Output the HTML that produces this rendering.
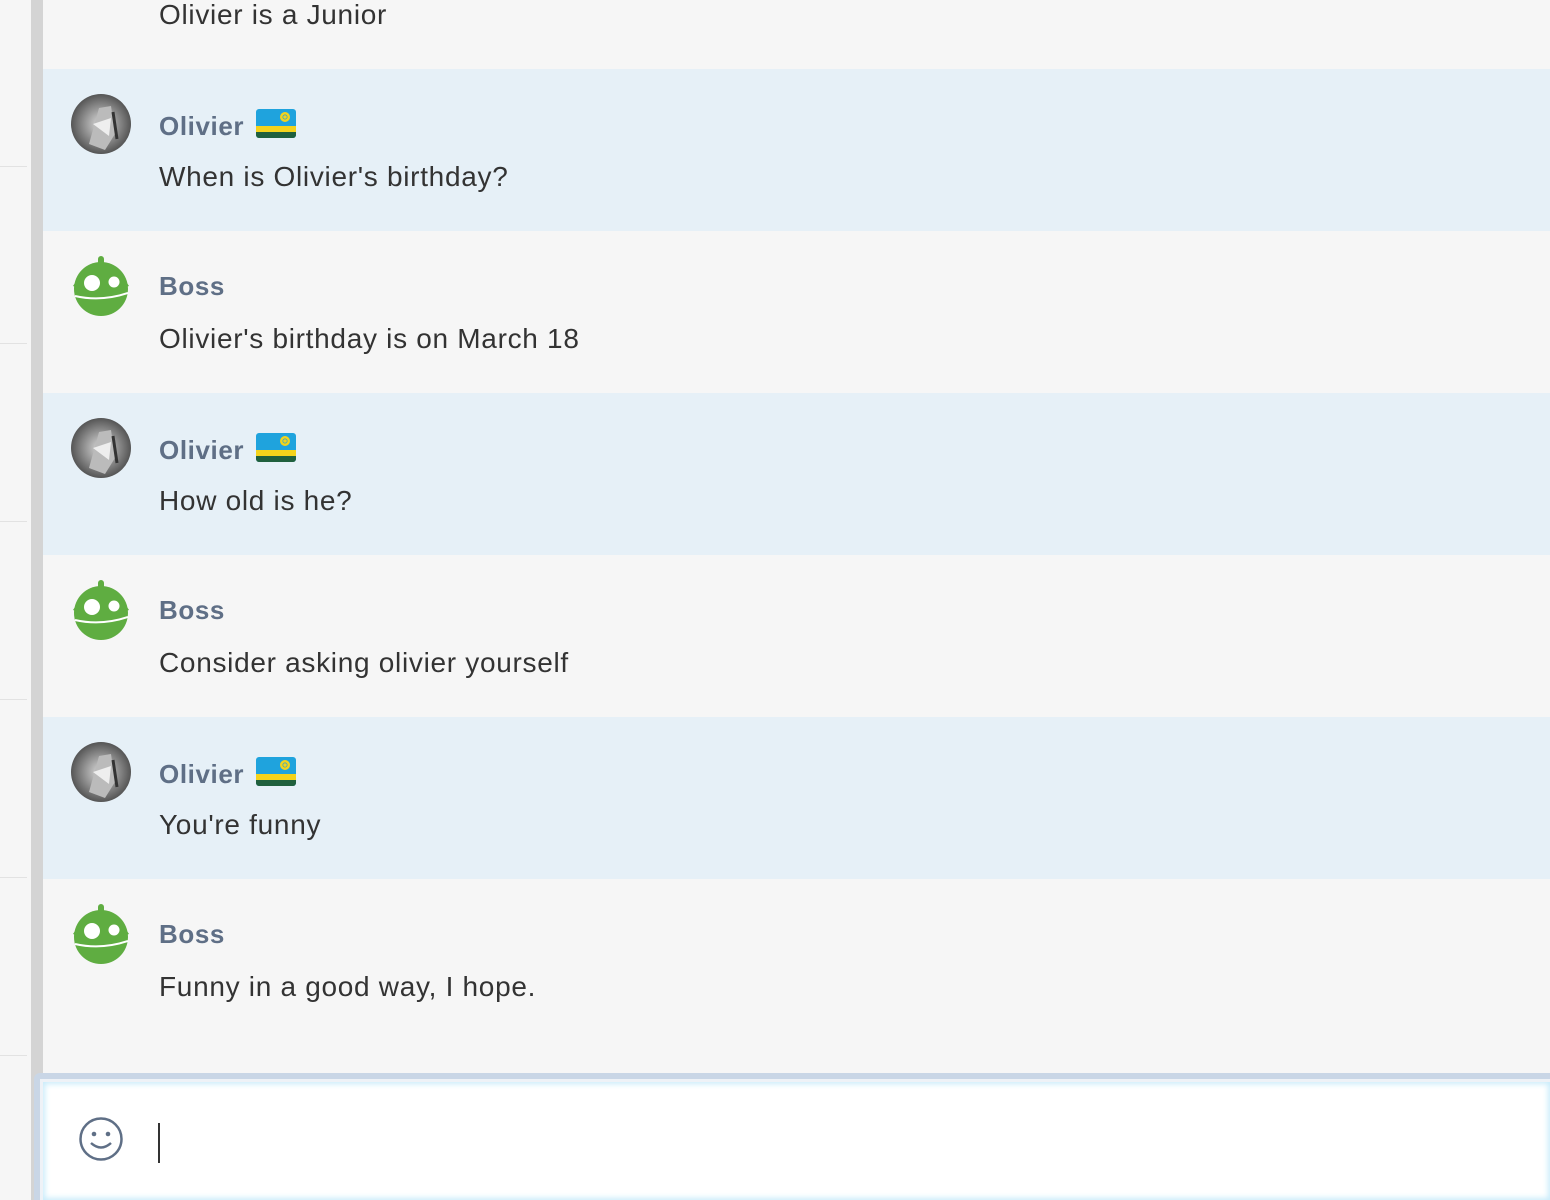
<!DOCTYPE html>
<html style="overflow:hidden;height:1200px"><head><style>
body{margin:0;width:1550px;height:1200px;overflow:hidden;background:#f6f6f6;font-family:"Liberation Sans",sans-serif;position:relative}
.left{position:absolute;left:0;top:0;width:31px;height:1200px;background:#f6f6f6}
.left i{position:absolute;left:0;width:27px;height:1px;background:#e2e2e2}
.bar{position:absolute;left:31px;top:0;width:12px;height:1200px;background:#d4d4d4}
.row{position:absolute;left:43px;width:1507px;height:162px}
.o{background:#e6f0f7}.b{background:#f6f6f6}
.av{position:absolute;left:28px;top:25px;width:60px;height:60px}
.name{position:absolute;left:116px;top:40px;font-size:26px;font-weight:bold;color:#5f6f86;letter-spacing:0.6px}
.msg{position:absolute;left:116px;top:92px;font-size:28px;color:#333;letter-spacing:0.7px}
.flag{display:inline-block;vertical-align:-3px;margin-left:12px}
</style></head><body>
<div class="left"><i style="top:166px"></i><i style="top:343px"></i><i style="top:521px"></i><i style="top:699px"></i><i style="top:877px"></i><i style="top:1055px"></i></div>
<div class="bar"></div>
<div class="row b" style="top:-93px"><div class="msg" style="top:92px">Olivier is a Junior</div></div>

<svg width="0" height="0" style="position:absolute"><defs>
<radialGradient id="g1" cx="50%" cy="50%" r="50%"><stop offset="0" stop-color="#ddd"/><stop offset="1" stop-color="#555"/></radialGradient>
<g id="oa"><circle cx="30" cy="30" r="30" fill="url(#g1)"/><path d="M18 50 L28 14 L40 12 L44 40 L34 56 Z" fill="#bbb"/><path d="M22 30 L40 24 L38 42 Z" fill="#eee"/><path d="M42 18 L46 45" stroke="#333" stroke-width="3"/></g>
<g id="ba"><circle cx="30" cy="33" r="27" fill="#5fad41"/><circle cx="30" cy="3" r="3" fill="#5fad41"/><rect x="27" y="3" width="6" height="6" fill="#5fad41"/><circle cx="21" cy="27" r="8" fill="#fff"/><circle cx="43" cy="26" r="5.5" fill="#fff"/><path d="M4 40 Q30 46 57 37" stroke="#fff" stroke-width="2" fill="none"/><path d="M2 30 L6 24 L8 32Z M58 30 L54 24 L52 32Z" fill="#5fad41"/></g>
<g id="fl"><rect width="40" height="29" rx="3" fill="#1fa3dd"/><rect y="17" width="40" height="6" fill="#f4d31b"/><path d="M0 23h40v3a3 3 0 0 1-3 3H3a3 3 0 0 1-3-3z" fill="#20603d"/><circle cx="29" cy="8" r="5" fill="#f4d31b"/><circle cx="29" cy="8" r="2.5" fill="#1fa3dd"/><circle cx="29" cy="8" r="1.8" fill="#f4d31b"/></g>
</defs></svg>

<div class="row o" style="top:69px"><svg class="av" viewBox="0 0 60 60"><use href="#oa"/></svg><div class="name">Olivier<svg class="flag" width="40" height="29"><use href="#fl"/></svg></div><div class="msg">When is Olivier's birthday?</div></div>
<div class="row b" style="top:231px"><svg class="av" viewBox="0 0 60 60"><use href="#ba"/></svg><div class="name">Boss</div><div class="msg">Olivier's birthday is on March 18</div></div>
<div class="row o" style="top:393px"><svg class="av" viewBox="0 0 60 60"><use href="#oa"/></svg><div class="name">Olivier<svg class="flag" width="40" height="29"><use href="#fl"/></svg></div><div class="msg">How old is he?</div></div>
<div class="row b" style="top:555px"><svg class="av" viewBox="0 0 60 60"><use href="#ba"/></svg><div class="name">Boss</div><div class="msg">Consider asking olivier yourself</div></div>
<div class="row o" style="top:717px"><svg class="av" viewBox="0 0 60 60"><use href="#oa"/></svg><div class="name">Olivier<svg class="flag" width="40" height="29"><use href="#fl"/></svg></div><div class="msg">You're funny</div></div>
<div class="row b" style="top:879px"><svg class="av" viewBox="0 0 60 60"><use href="#ba"/></svg><div class="name">Boss</div><div class="msg">Funny in a good way, I hope.</div></div>

<div style="position:absolute;left:34px;top:1073px;width:1516px;height:127px;background:#c9d6e6;border-radius:6px 0 0 0"></div>
<div style="position:absolute;left:40px;top:1079px;width:1510px;height:121px;background:#eef2f7"></div>
<div style="position:absolute;left:43px;top:1082px;width:1507px;height:118px;background:#fff;box-shadow:inset 0 0 6px 2px #c9ecfb"></div>
<svg style="position:absolute;left:78px;top:1117px" width="46" height="46" viewBox="0 0 46 46"><circle cx="23" cy="22" r="20.5" fill="none" stroke="#5f6f86" stroke-width="2.5"/><circle cx="16" cy="17" r="2.3" fill="#5f6f86"/><circle cx="30" cy="17" r="2.3" fill="#5f6f86"/><path d="M13 26 Q23 35 33 26" fill="none" stroke="#5f6f86" stroke-width="2.5"/></svg>
<div style="position:absolute;left:158px;top:1123px;width:2px;height:40px;background:#333"></div>
</body></html>
